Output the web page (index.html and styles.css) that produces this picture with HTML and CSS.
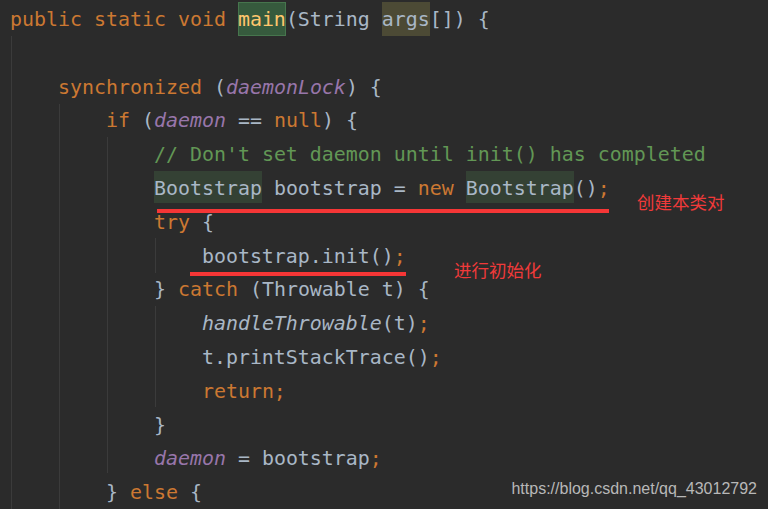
FILE: index.html
```html
<!DOCTYPE html>
<html lang="zh">
<head>
<meta charset="utf-8">
<title>Bootstrap main</title>
<link rel="stylesheet" href="styles.css">
</head>
<body>
<div class="editor">
  <div class="guide g0"></div>
  <div class="guide g4"></div>
  <div class="guide g8"></div>
  <div class="guide g12a"></div>
  <div class="guide g12b"></div>

  <div class="code">
    <div class="line"><span class="kw">public static void </span><span class="box-decl"><span class="decl">main</span></span>(String <span class="box-param">args</span>[]) {</div>
    <div class="line"> </div>
    <div class="line">    <span class="kw">synchronized</span> (<span class="field">daemonLock</span>) {</div>
    <div class="line">        <span class="kw">if</span> (<span class="field">daemon</span> == <span class="kw">null</span>) {</div>
    <div class="line">            <span class="comment">// Don't set daemon until init() has completed</span></div>
    <div class="line">            <span class="box-type">Bootstrap</span> bootstrap = <span class="kw">new</span> <span class="box-type">Bootstrap</span>()<span class="kw">;</span></div>
    <div class="line">            <span class="kw">try</span> {</div>
    <div class="line">                bootstrap.init()<span class="kw">;</span></div>
    <div class="line">            } <span class="kw">catch</span> (Throwable t) {</div>
    <div class="line">                <span class="static">handleThrowable</span>(t)<span class="kw">;</span></div>
    <div class="line">                t.printStackTrace()<span class="kw">;</span></div>
    <div class="line">                <span class="kw">return;</span></div>
    <div class="line">            }</div>
    <div class="line">            <span class="field">daemon</span> = bootstrap<span class="kw">;</span></div>
    <div class="line">        } <span class="kw">else</span> {</div>
  </div>

  <div class="mark mark-1"></div>
  <div class="mark mark-2"></div>
  <div class="note note-1">创建本类对</div>
  <div class="note note-2">进行初始化</div>
  <div class="watermark">https://blog.csdn.net/qq_43012792</div>
</div>
</body>
</html>
```
FILE: styles.css
```css
html, body {
  margin: 0;
  padding: 0;
  background: #2b2b2b;
}

.editor {
  position: relative;
  width: 768px;
  height: 509px;
  overflow: hidden;
  background: #2b2b2b;
}

.code {
  position: relative;
  padding: 3px 0 0 10px;
  font-family: "DejaVu Sans Mono", "Liberation Mono", monospace;
  font-size: 19.93px;
  color: #a9b7c6;
  z-index: 1;
}

.line {
  height: 33.8px;
  line-height: 33.8px;
  white-space: pre;
}

.kw { color: #cc7832; }
.decl { color: #ffc66d; }
.field { color: #9876aa; font-style: italic; }
.static { font-style: italic; }
.comment { color: #629755; }

.box-decl {
  padding: 6px 0 4.5px;
  background: #365a3d;
  box-shadow: inset 0 0 0 1px #46754d;
}

.box-param {
  padding: 6px 0 4.5px;
  background: #4c4a35;
}

.box-type {
  padding: 6px 0 2.6px;
  background: #344134;
}

.guide {
  position: absolute;
  width: 1px;
  background: #3b3b3b;
}
.g0 { left: 11px; top: 36px; height: 473px; }
.g4 { left: 59px; top: 104px; height: 405px; }
.g8 { left: 107px; top: 137px; height: 336px; }
.g12a { left: 155px; top: 238px; height: 35px; }
.g12b { left: 155px; top: 306px; height: 101px; }

.mark {
  position: absolute;
  height: 4px;
  background: #f53636;
  z-index: 2;
}
.mark-1 { left: 157px; top: 209px; width: 452px; }
.mark-2 { left: 190px; top: 272px; width: 216px; }

.note {
  position: absolute;
  font-family: "Noto Sans CJK SC", sans-serif;
  font-size: 17.5px;
  line-height: 18px;
  color: #f03a3a;
  z-index: 2;
}
.note-1 { left: 637px; top: 193px; }
.note-2 { left: 454px; top: 261px; }

.watermark {
  position: absolute;
  right: 11px;
  top: 481px;
  font-family: "Liberation Sans", Arial, sans-serif;
  font-size: 16px;
  line-height: 16px;
  color: #b8b8b8;
  z-index: 2;
}
```
